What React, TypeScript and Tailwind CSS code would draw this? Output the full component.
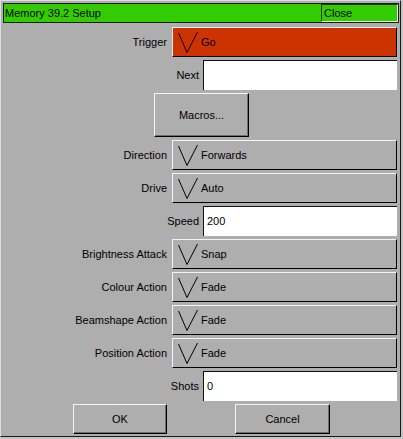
import React from 'react';

const font = "font-['Liberation_Sans',Arial,sans-serif] text-[11px] leading-none text-black";

const Vee: React.FC = () => (
  <svg width="20" height="21" viewBox="0 0 20 21" className="ml-[5px] shrink-0">
    <polyline points="0.5,1 9,20.5 19.5,0" fill="none" stroke="#000" strokeWidth="1" />
  </svg>
);

const Label: React.FC<{ text: string; gap: string }> = ({ text, gap }) => (
  <span className={`${gap} whitespace-nowrap`}>{text}</span>
);

const DropRow: React.FC<{ label: string; value: string; red?: boolean }> = ({ label, value, red }) => (
  <div className="flex items-center justify-end pr-[2px] h-[30px]">
    <Label text={label} gap="mr-[5px]" />
    <div
      className={`w-[225px] h-[30px] flex items-center border-t border-l border-[#f4f4f4] border-r border-b border-r-black border-b-black ${
        red ? 'bg-[#cc3300]' : 'bg-[#aeaeae]'
      }`}
    >
      <Vee />
      <span className="ml-[3px]">{value}</span>
    </div>
  </div>
);

const InputRow: React.FC<{ label: string; value: string }> = ({ label, value }) => (
  <div className="flex items-center justify-end pr-[2px] h-[30px]">
    <Label text={label} gap="mr-[4px]" />
    <div className="w-[194px] h-[30px] flex items-center bg-white border-t border-l border-[#111] pl-[3px]">
      {value}
    </div>
  </div>
);

const PushButton: React.FC<{ label: string; className: string }> = ({ label, className }) => (
  <div
    className={`flex items-center justify-center bg-[#aeaeae] border-t border-l border-[#f4f4f4] border-r border-b border-r-black border-b-black shadow-[inset_-1px_-1px_0_#6e6e6e] ${className}`}
  >
    {label}
  </div>
);

export default function App() {
  return (
    <div className="w-[403px] h-[439px] bg-[#c4c4c4]">
      <div className={`w-[401px] h-[437px] bg-[#aeaeae] border-l border-t border-[#dedede] border-r border-b border-r-[#1a1a1a] border-b-[#1a1a1a] pl-[2px] pt-[2px] pr-[1px] flex flex-col ${font}`}>
        {/* title bar */}
        <div className="h-[20px] flex bg-[#33cc00] border border-[#1a1a1a]">
          <div className="flex-1 flex items-center pl-[1px]">Memory 39.2 Setup</div>
          <div className="w-[77px] flex items-center pl-[2px] border-t border-l border-[#1f3a10] border-r border-b border-r-[#e6f5dd] border-b-[#e6f5dd]">
            Close
          </div>
        </div>

        <div className="mt-[4px] flex flex-col gap-[3px]">
          <DropRow label="Trigger" value="Go" red />
          <InputRow label="Next" value="" />
          <div className="h-[44px] flex">
            <PushButton label="Macros..." className="ml-[151px] w-[95px] h-[44px]" />
          </div>
          <DropRow label="Direction" value="Forwards" />
          <DropRow label="Drive" value="Auto" />
          <InputRow label="Speed" value="200" />
          <DropRow label="Brightness Attack" value="Snap" />
          <DropRow label="Colour Action" value="Fade" />
          <DropRow label="Beamshape Action" value="Fade" />
          <DropRow label="Position Action" value="Fade" />
          <InputRow label="Shots" value="0" />
          <div className="flex h-[30px]">
            <PushButton label="OK" className="ml-[70px] w-[94px] h-[30px]" />
            <PushButton label="Cancel" className="ml-[68px] w-[95px] h-[30px]" />
          </div>
        </div>
      </div>
    </div>
  );
}
